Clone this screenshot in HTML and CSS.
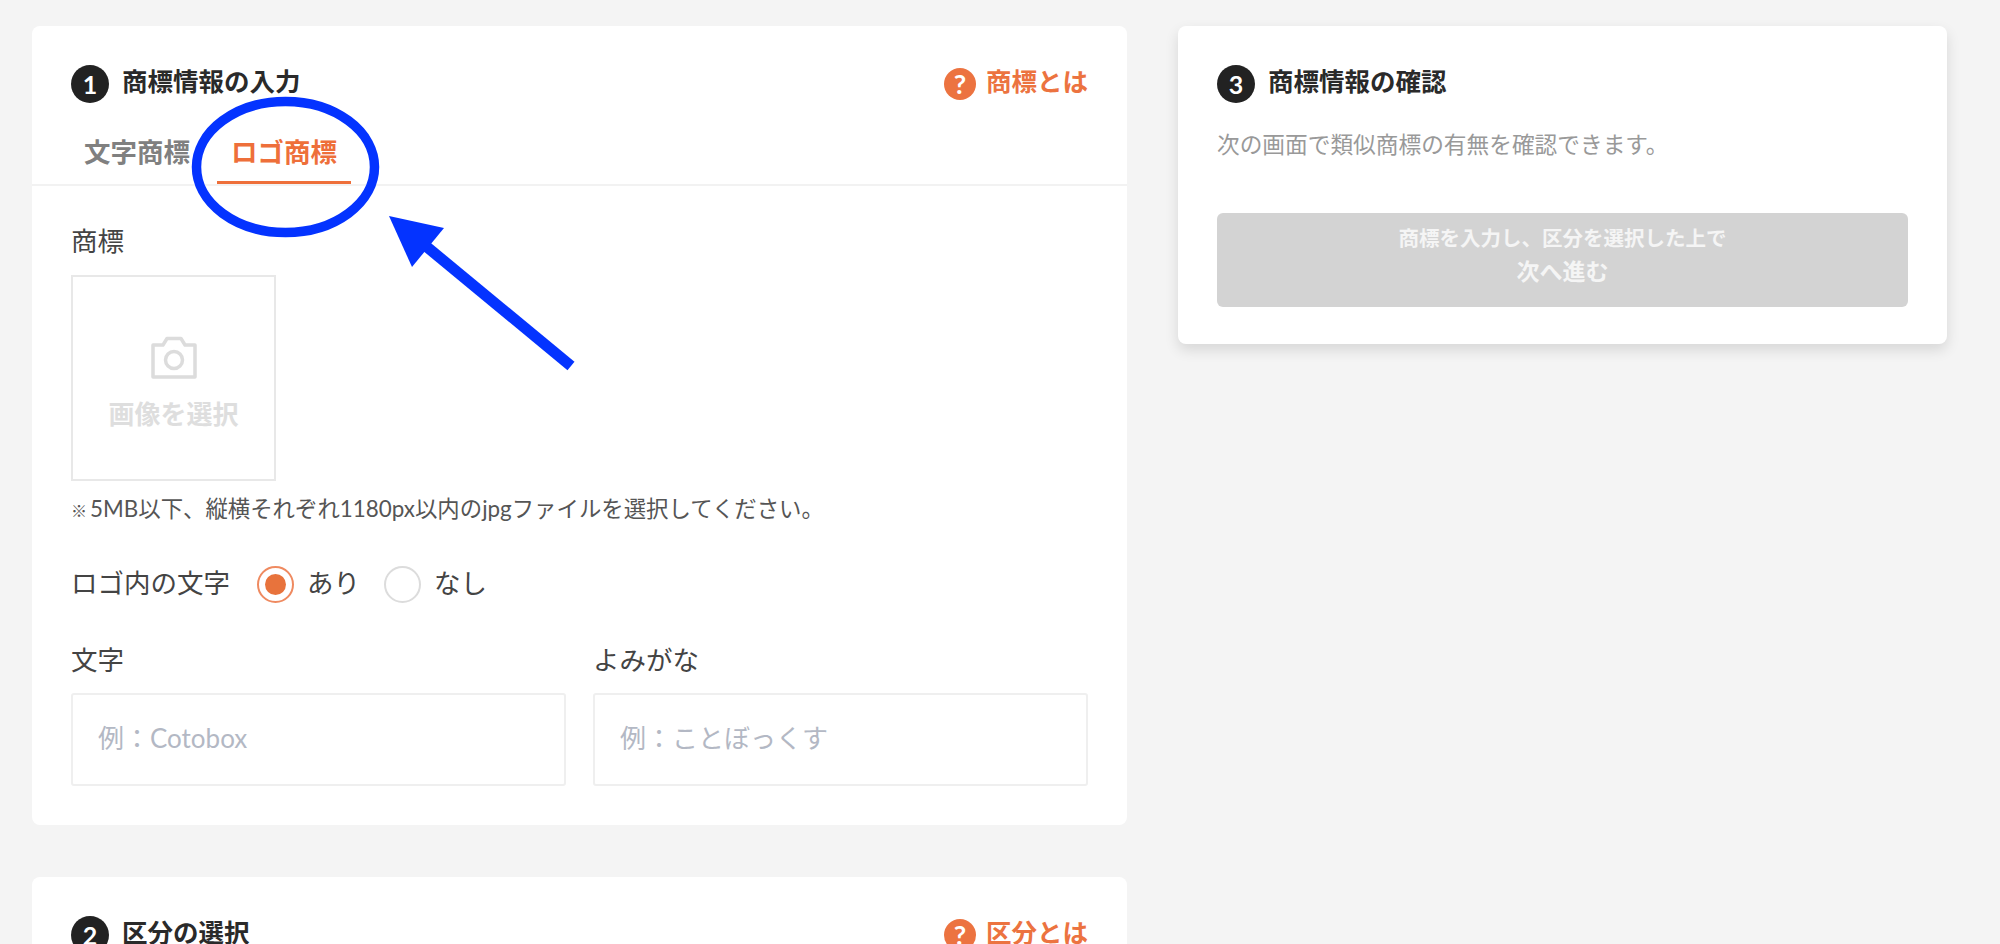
FILE: index.html
```html
<!DOCTYPE html>
<html lang="ja">
  <head>
    <meta charset="UTF-8" />
    <meta name="viewport" content="width=device-width, initial-scale=1.0" />
    <title>商標情報の入力</title>
    <link rel="stylesheet" href="styles.css">
  </head>
  <body>
    <div class="page">
      <main class="main-col">
        <section class="card">
          <div class="card-head">
            <h2 class="step-title"><span class="step-num">1</span><span class="step-text">商標情報の入力</span></h2>
            <a class="help-link"><span class="help-icon">?</span><span class="help-text">商標とは</span></a>
          </div>
          <div class="tabs">
            <span class="tab">文字商標</span>
            <span class="tab tab-active">ロゴ商標</span>
          </div>
          <div class="field-label label-logo">商標</div>
          <div class="upload-box">
            <svg class="camera" viewBox="0 0 48 43" width="48" height="43" fill="none" stroke="#dcdcdc" stroke-width="3.500" stroke-linejoin="round">
              <path d="M3 9h10l4-6.500h14l4 6.500h10v32h-42z" />
              <circle cx="24" cy="24" r="8.500" />
            </svg>
            <span class="upload-text">画像を選択</span>
          </div>
          <p class="note"><span class="note-mark">※</span>5MB以下、縦横それぞれ1180px以内のjpgファイルを選択してください。</p>
          <div class="radio-row">
            <span class="radio-title">ロゴ内の文字</span>
            <span class="radio radio-on"></span>
            <span class="radio-text">あり</span>
            <span class="radio"></span>
            <span class="radio-text">なし</span>
          </div>
          <div class="input-grid">
            <div>
              <div class="field-label">文字</div>
              <div class="input-box">例：Cotobox</div>
            </div>
            <div>
              <div class="field-label">よみがな</div>
              <div class="input-box">例：ことぼっくす</div>
            </div>
          </div>
        </section>
        <section class="card">
          <div class="card-head">
            <h2 class="step-title"><span class="step-num">2</span><span class="step-text">区分の選択</span></h2>
            <a class="help-link"><span class="help-icon">?</span><span class="help-text">区分とは</span></a>
          </div>
        </section>
      </main>
      <aside class="side-col">
        <section class="card card-raised">
          <h2 class="step-title"><span class="step-num">3</span><span class="step-text">商標情報の確認</span></h2>
          <p class="side-text">次の画面で類似商標の有無を確認できます。</p>
          <div class="next-btn">
            <span class="next-sub">商標を入力し、区分を選択した上で</span>
            <span class="next-main">次へ進む</span>
          </div>
        </section>
      </aside>
    </div>

    <svg class="annotation" width="2000" height="944" viewBox="0 0 2000 944" fill="none">
      <ellipse cx="285.500" cy="167" rx="89" ry="65.500" stroke="#0433ff" stroke-width="9.500" />
      <path d="M571 366L427 247" stroke="#0433ff" stroke-width="11" />
      <path d="M389 216L444 228L412 267Z" fill="#0433ff" />
    </svg>
  </body>
</html>
```

FILE: styles.css
```css
* {
  box-sizing: border-box;
}

html, body {
  margin: 0;
  height: 944px;
  overflow: hidden;
}

body {
  position: relative;
  background-color: #f4f4f4;
  color: #333;
  font-family: Lato, "Noto Sans CJK JP", sans-serif;
}

.page {
  display: flex;
  align-items: flex-start;
  gap: 51px;
  padding: 26px 0 0 32px;
}

.main-col {
  width: 1095px;
  display: flex;
  flex-direction: column;
  gap: 52px;
}

.side-col {
  width: 769px;
}

.card {
  background-color: #fff;
  border-radius: 8px;
  padding: 39px;
}

.card-raised {
  height: 318px;
  box-shadow: 0 6px 14px rgba(0, 0, 0, 0.12);
}

.card-head {
  display: flex;
  justify-content: space-between;
  align-items: center;
  height: 38px;
}

.step-title {
  display: flex;
  align-items: center;
  gap: 13px;
  margin: 0;
  height: 38px;
  font-size: 25.500px;
  font-weight: 700;
  color: #2a2a2a;
}

.step-text {
  padding-bottom: 6px;
  line-height: 32px;
}

.step-num {
  width: 38px;
  height: 38px;
  border-radius: 50%;
  background-color: #222;
  color: #fff;
  font-size: 25px;
  line-height: 38px;
  text-align: center;
}

.help-link {
  display: flex;
  align-items: center;
  gap: 10px;
  font-size: 25.500px;
  font-weight: 700;
  color: #ec7340;
}

.help-text {
  padding-bottom: 7px;
  line-height: 30px;
}

.help-icon {
  width: 32px;
  height: 32px;
  border-radius: 50%;
  background-color: #ec7340;
  color: #fff;
  font-size: 27px;
  line-height: 32px;
  text-align: center;
}

.tabs {
  display: flex;
  gap: 13px;
  margin: 31px -39px 0;
  padding-left: 38px;
  border-bottom: 2px solid #f2f2f2;
}

.tab {
  padding: 0 14px 10px;
  border-bottom: 3px solid transparent;
  font-size: 26.500px;
  line-height: 37px;
  font-weight: 700;
  color: #808080;
}

.tab-active {
  color: #ee6f3a;
  border-bottom-color: #ee6f3a;
}

.field-label {
  font-size: 26.500px;
  line-height: 36px;
  color: #444;
}

.label-logo {
  margin-top: 37px;
}

.upload-box {
  display: flex;
  flex-direction: column;
  align-items: center;
  width: 205px;
  height: 206px;
  margin-top: 16px;
  padding-top: 59px;
  border: 2px solid #e8e8e8;
}

.upload-text {
  margin-top: 16px;
  font-size: 26px;
  line-height: 38px;
  font-weight: 700;
  color: #dedede;
}

.note {
  margin: 12px 0 0;
  font-size: 22.400px;
  line-height: 32px;
  color: #555;
}

.note-mark {
  display: inline-block;
  width: 19px;
  font-size: 16px;
  font-weight: 700;
}

.radio-row {
  display: flex;
  align-items: center;
  height: 37px;
  margin-top: 39px;
  font-size: 26.500px;
  color: #444;
}

.radio-title {
  width: 186px;
  padding-bottom: 6px;
}

.radio {
  position: relative;
  width: 37px;
  height: 37px;
  border-radius: 50%;
  border: 2px solid #dcdcdc;
}

.radio-on {
  border-color: #ef8a60;
}

.radio-on::after {
  content: "";
  position: absolute;
  top: 6px;
  left: 6px;
  width: 21px;
  height: 21px;
  border-radius: 50%;
  background-color: #e8733c;
}

.radio-text {
  width: 77px;
  margin-left: 13px;
  padding-bottom: 6px;
}

.input-grid {
  display: grid;
  grid-template-columns: 495px 495px;
  gap: 27px;
  margin-top: 39px;
}

.input-box {
  height: 93px;
  margin-top: 15px;
  padding: 0 25px;
  border: 2px solid #efefef;
  border-radius: 3px;
  font-size: 26px;
  line-height: 87px;
  color: #b3b8c4;
}

.side-text {
  margin: 24px 0 0;
  font-size: 22.700px;
  line-height: 36px;
  color: #999;
}

.next-btn {
  display: flex;
  flex-direction: column;
  align-items: center;
  height: 94px;
  margin-top: 50px;
  padding-top: 10px;
  background-color: #d3d3d3;
  border-radius: 6px;
  color: #f5f5f5;
  font-weight: 700;
}

.next-sub {
  font-size: 20.500px;
  line-height: 30px;
}

.next-main {
  margin-top: 1px;
  font-size: 23px;
  line-height: 34px;
}

.annotation {
  position: absolute;
  top: 0;
  left: 0;
  pointer-events: none;
}
```
